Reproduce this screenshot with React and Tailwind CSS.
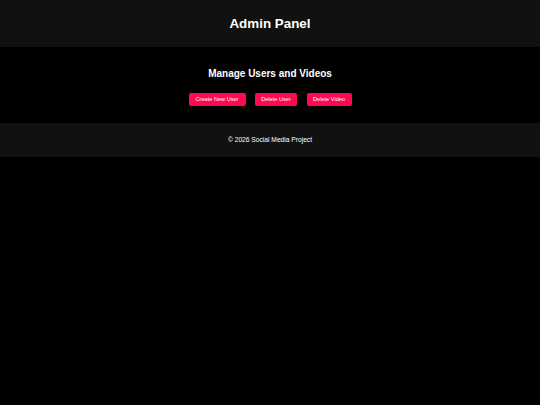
export default function App() {
    const buttons = [
        { label: "Create New User", width: "w-[57px]" },
        { label: "Delete User", width: "w-[42px]" },
        { label: "Delete Video", width: "w-[45px]" },
    ];

    return (
        <div className="min-h-[405px] bg-black text-white font-['Liberation_Sans',Arial,sans-serif]">
            <header className="h-[47px] bg-[#111111] flex items-center justify-center">
                <h1 className="text-[13.4px] font-bold leading-none">Admin Panel</h1>
            </header>

            <main className="pt-[21px] pb-[17px] flex flex-col items-center">
                <h2 className="text-[10px] font-bold leading-[12px]">Manage Users and Videos</h2>
                <div className="mt-[13px] flex items-center gap-[9.5px]">
                    {buttons.map((b) => (
                        <button
                            key={b.label}
                            className={`${b.width} h-[13px] rounded-[2px] bg-[#ff0a50] text-white text-[5.6px] leading-none whitespace-nowrap`}
                        >
                            {b.label}
                        </button>
                    ))}
                </div>
            </main>

            <footer className="h-[34px] bg-[#111111] flex items-center justify-center">
                <p className="text-[6.67px] leading-none">© 2026 Social Media Project</p>
            </footer>
        </div>
    )
}
